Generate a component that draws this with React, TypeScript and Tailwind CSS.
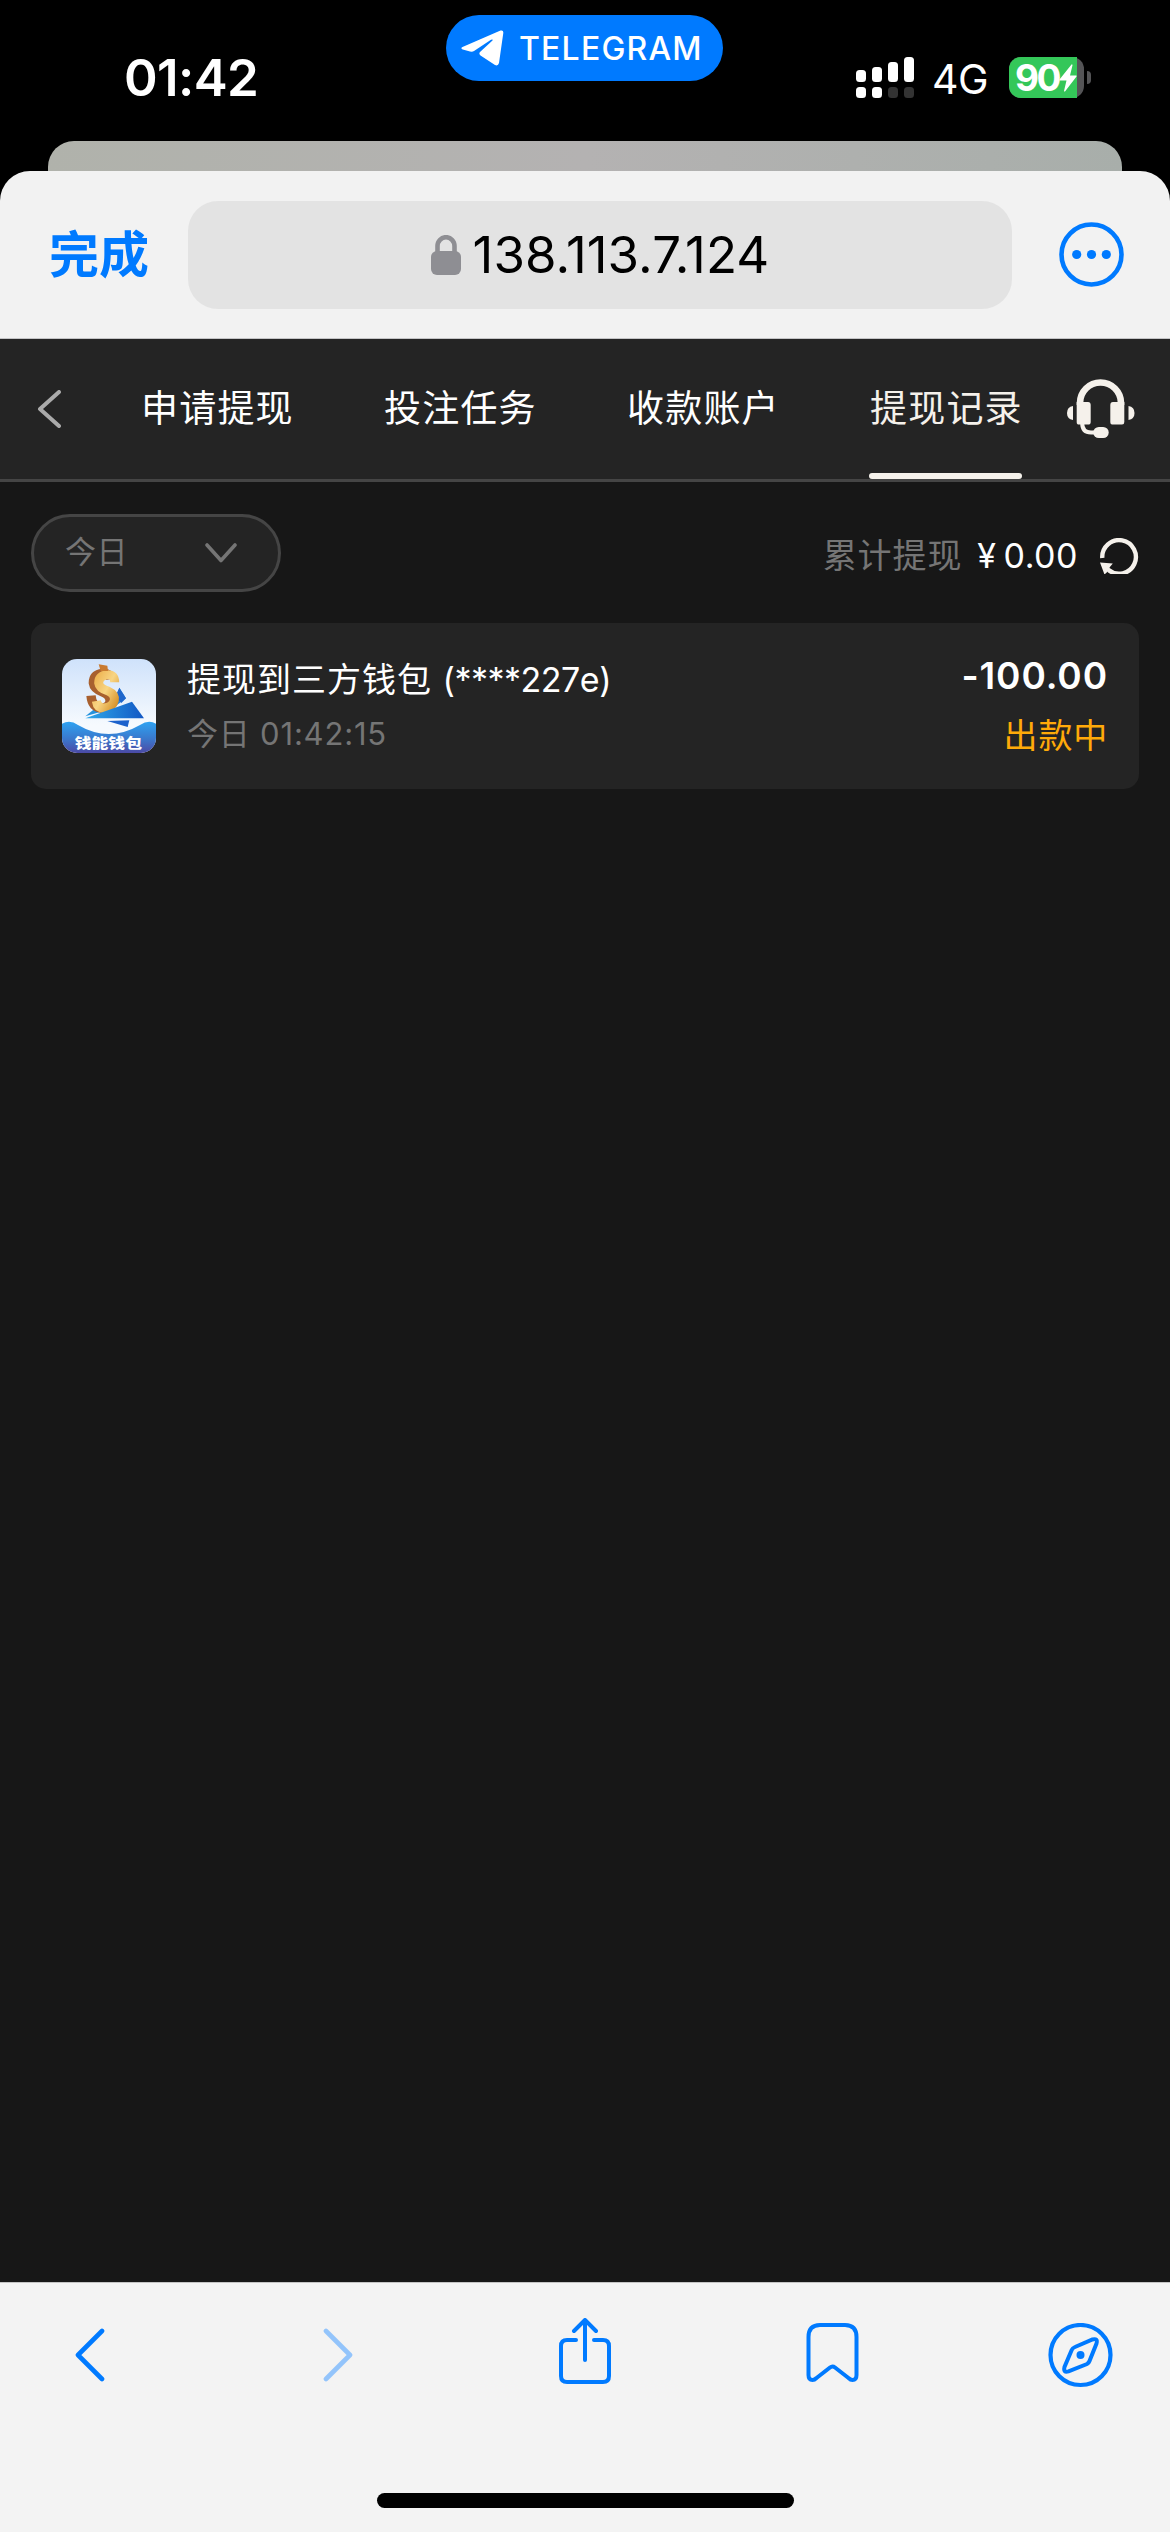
import type { ReactNode } from 'react';

const tabs = ['申请提现', '投注任务', '收款账户', '提现记录'];

const records = [
  { title: '提现到三方钱包', account: '(****227e)', time: '今日 01:42:15', amount: '-100.00', status: '出款中' },
];

function Icon({ w, h, className, children }: { w: number; h: number; className?: string; children: ReactNode }) {
  return (
    <svg width={w} height={h} viewBox={`0 0 ${w} ${h}`} fill="none" className={`block shrink-0 ${className ?? ''}`}>
      {children}
    </svg>
  );
}

function Signal() {
  return (
    <Icon w={58} h={41}>
      <rect x="0" y="13" width="10" height="12" rx="3.5" fill="#fff" />
      <rect x="16" y="10" width="10" height="15" rx="3.5" fill="#fff" />
      <rect x="32" y="5" width="10" height="20" rx="3.5" fill="#fff" />
      <rect x="48" y="0" width="10" height="25" rx="3.5" fill="#fff" />
      <rect x="0" y="30" width="10" height="11" rx="3.5" fill="#fff" />
      <rect x="16" y="30" width="10" height="11" rx="3.5" fill="#fff" />
      <rect x="32" y="30" width="10" height="11" rx="3.5" fill="#333" />
      <rect x="48" y="30" width="10" height="11" rx="3.5" fill="#333" />
    </Icon>
  );
}

function Battery() {
  return (
    <div className="flex items-center gap-[3px]">
      <div className="flex h-[41px] w-[75px] rounded-[12px] bg-[#545456]">
        <div className="flex w-[68px] shrink-0 items-center rounded-l-[12px] bg-[#34c759] pl-[6px]">
          <span className="w-[45px] text-[37px] leading-[43px] font-bold tracking-[-2.5px] text-white">90</span>
          <Icon w={18} h={28}>
            <path d="M12.5 0.5 L0.5 15.5 Q0 16.5 1 16.5 H7.5 L5 27 Q5.2 28 6.2 27.2 L17.5 12.5 Q18 11.5 17 11.5 H11 L13.5 1.2 Q13.4 0 12.5 0.5Z" fill="#fff" />
          </Icon>
        </div>
      </div>
      <div className="h-[13px] w-[4px] rounded-r-full bg-[#545456]" />
    </div>
  );
}

function StatusBar() {
  return (
    <div className="flex h-[141px] items-start">
      <div className="w-[446px] pt-[48px] pl-[124px] text-[51px] leading-[60px] font-semibold tracking-[-0.6px] text-white">01:42</div>
      <div className="mt-[15px] flex h-[66px] w-[277px] items-center rounded-full bg-[#007aff] pl-[15px]">
        <Icon w={43} h={36}>
          <path d="M1.5 17 L39.5 0.6 Q42.5 -0.3 42.3 3 L38 33 Q37 36.5 34 35 L19.5 25.5 Q17.5 24 19 22 L31.5 10.5 Q32.2 8.8 30 9.8 L13 21 Q11.5 22 9 21.5 L1.8 19.5 Q-0.8 18.3 1.5 17Z" fill="#fff" />
        </Icon>
        <span className="mt-[2px] ml-[15px] text-[32px] leading-[66px] font-medium tracking-[1.2px] text-white">TELEGRAM</span>
      </div>
      <div className="flex items-center pt-[57px] pl-[133px]">
        <Signal />
        <span className="ml-[18px] h-[41px] w-[77px] text-[41px] leading-[44px] tracking-[-0.5px] text-white">4G</span>
        <Battery />
      </div>
    </div>
  );
}

function AddressBar() {
  return (
    <div className="flex h-[168px] items-start rounded-t-[30px] border-b border-[#c4c4c6] bg-[#f2f2f2] pt-[30px]">
      <button className="w-[188px] pl-[49px] text-left text-[50px] leading-[108px] font-semibold text-[#007aff]">完成</button>
      <div className="flex h-[108px] w-[824px] items-center justify-center rounded-[30px] bg-[#e3e3e3]">
        <Icon w={30} h={40}>
          <rect x="0" y="16" width="30" height="24" rx="6" fill="#8e8e93" />
          <path d="M6.5 18 V11 A8.5 8.8 0 0 1 23.5 11 V18" stroke="#8e8e93" strokeWidth="4.6" />
        </Icon>
        <span className="ml-[12px] text-[51px] leading-[108px] tracking-[0.1px] text-black">138.113.7.124</span>
      </div>
      <Icon w={65} h={65} className="mt-[21px] ml-[47px]">
        <circle cx="32.5" cy="32.5" r="30" stroke="#007aff" strokeWidth="4.6" />
        <circle cx="17.7" cy="32.5" r="4.6" fill="#007aff" />
        <circle cx="32.5" cy="32.5" r="4.6" fill="#007aff" />
        <circle cx="47.3" cy="32.5" r="4.6" fill="#007aff" />
      </Icon>
    </div>
  );
}

function TabBar() {
  return (
    <div className="flex h-[143px] items-start border-b-[3px] border-[#454545] bg-[#242424]">
      <Icon w={24} h={38} className="mt-[51px] ml-[37px]">
        <path d="M22 2 L3 19 L22 36" stroke="#aaa" strokeWidth="4" strokeLinecap="round" strokeLinejoin="round" />
      </Icon>
      <div className="ml-[79px] flex gap-[90px]">
        {tabs.map((tab) => (
          <button
            key={tab}
            className={
              tab === '提现记录'
                ? 'flex h-[140px] w-[153px] flex-col justify-between text-left text-[#f5f1eb]'
                : 'flex h-[140px] w-[153px] flex-col justify-between text-left text-white'
            }
          >
            <span className="pt-[40px] pl-[1px] text-[37px] leading-[60px] tracking-[1.2px] whitespace-nowrap">{tab}</span>
            {tab === '提现记录' && <span className="h-[6px] w-full rounded-[3px] bg-[#f5f1eb]" />}
          </button>
        ))}
      </div>
      <Icon w={68} h={60} className="mt-[40px] ml-[45px]">
        <path d="M13 26 V24 A20.5 20.5 0 0 1 54 24 V26" stroke="#f5f1eb" strokeWidth="6.6" />
        <path d="M9.7 23 H21 Q23.7 23 23.7 26 V43 Q23.7 45.6 21 45.6 H12 Q9.7 45.6 9.7 43Z" fill="#f5f1eb" />
        <path d="M57.3 23 H46 Q43.3 23 43.3 26 V43 Q43.3 45.6 46 45.6 H55 Q57.3 45.6 57.3 43Z" fill="#f5f1eb" />
        <path d="M6 27 V41 Q0 40 0 34 Q0 28 6 27Z" fill="#f5f1eb" />
        <path d="M61.5 27 V41 Q67.5 40 67.5 34 Q67.5 28 61.5 27Z" fill="#f5f1eb" />
        <path d="M15.2 44 Q15.2 53.5 24 53.5 H30" stroke="#f5f1eb" strokeWidth="4" />
        <rect x="26.3" y="48" width="15.4" height="11" rx="5.5" fill="#f5f1eb" />
      </Icon>
    </div>
  );
}

function WalletLogo() {
  return (
    <svg width="94" height="94" viewBox="0 0 282 282" className="block shrink-0 rounded-[15px]">
      <defs>
        <linearGradient id="sky" x1="0" y1="0" x2="0" y2="1">
          <stop offset="0" stopColor="#cfe2fb" />
          <stop offset="0.7" stopColor="#f6fafe" />
        </linearGradient>
        <linearGradient id="wave" x1="0" y1="0" x2="0" y2="1">
          <stop offset="0" stopColor="#2ea3f2" />
          <stop offset="0.55" stopColor="#3a78cc" />
          <stop offset="1" stopColor="#4c4aa6" />
        </linearGradient>
        <linearGradient id="plane" x1="0" y1="0" x2="1" y2="0">
          <stop offset="0" stopColor="#2fa9ea" />
          <stop offset="1" stopColor="#1257c4" />
        </linearGradient>
        <linearGradient id="gold" x1="0" y1="0" x2="1" y2="1">
          <stop offset="0" stopColor="#eeb452" />
          <stop offset="0.5" stopColor="#f8d584" />
          <stop offset="1" stopColor="#d9952c" />
        </linearGradient>
      </defs>
      <rect width="282" height="282" fill="url(#sky)" />
      <path d="M172 86 L192 118 L152 148Z" fill="#2a86dc" />
      <path d="M172 86 L192 118 L178 132 L160 112Z" fill="#1f66cb" />
      <path d="M70 172 L100 148 L112 160Z" fill="#2492dd" />
      {/* bronze edge of the dollar sign */}
      <path d="M146 60 Q142 42 122 43 Q94 46 94 72 Q96 90 124 100 Q146 110 144 128 Q140 148 116 147 Q90 144 87 110" fill="none" stroke="#a8602f" strokeWidth="28" />
      <path d="M158 70 Q158 46 136 47 Q110 50 110 72 Q112 88 138 96 Q160 106 157 124 Q152 146 126 147 Q106 147 103 126" fill="none" stroke="url(#gold)" strokeWidth="27" />
      <path d="M110 16 L136 20 L138 36 L116 36Z" fill="#c97a30" />
      <path d="M70 178 L210 128 L246 178Z" fill="url(#plane)" />
      <path d="M136 186 L202 184 L197 204Z" fill="#1c62cc" />
      <path d="M0 194 Q24 180 48 198 Q140 252 234 198 Q260 180 282 194 V282 H0Z" fill="url(#wave)" />
      <text x="139" y="268" textAnchor="middle" fontSize="41" fontWeight="900" fill="#fff" textLength="202" lengthAdjust="spacingAndGlyphs">钱能钱包</text>
    </svg>
  );
}

function FilterRow() {
  return (
    <div className="flex items-start justify-between pt-[32px] pr-[31px] pl-[31px]">
      <button className="flex h-[78px] w-[250px] items-center justify-between rounded-full border-[3px] border-[#454545] bg-[#242424] pr-[41px] pl-[31px] text-[#757575]">
        <span className="-mt-[3px] text-[31px] leading-[60px] tracking-[0.6px]">今日</span>
        <Icon w={32} h={20}>
          <path d="M2 2 L16 17.5 L30 2" stroke="#757575" strokeWidth="3.6" strokeLinecap="round" strokeLinejoin="round" />
        </Icon>
      </button>
      <div className="flex h-[84px] items-center">
        <span className="text-[34px] leading-[60px] tracking-[0.9px] text-[#757575]">累计提现</span>
        <span className="ml-[15px] text-[34px] leading-[60px] tracking-[0.5px] [word-spacing:-3px] text-white">¥ 0.00</span>
        <Icon w={39} h={36} className="ml-[22px]">
          <path d="M2.3 20 A16.8 16.8 0 1 1 8.5 32" stroke="#f5f1eb" strokeWidth="4.4" />
          <path d="M0 24.6 L12.8 25.4 L9.5 29.5 L11 33 L8 33.2 L4.5 36.5Z" fill="#f5f1eb" />
        </Icon>
      </div>
    </div>
  );
}

function BottomBar() {
  return (
    <div className="flex h-[250px] flex-col border-t border-[#c4c4c4] bg-[#f3f3f3]">
      <div className="flex h-[210px] items-start pt-[33px] pl-[73px] text-[#007aff]">
        <Icon w={32} h={56} className="mt-[10px]">
          <path d="M29 5 L5 29 L29 53" stroke="currentColor" strokeWidth="4.6" strokeLinecap="round" strokeLinejoin="round" />
        </Icon>
        <Icon w={32} h={56} className="mt-[10px] ml-[218px]">
          <path d="M3 5 L27 29 L3 53" stroke="#93c4fb" strokeWidth="4.6" strokeLinecap="round" strokeLinejoin="round" />
        </Icon>
        <Icon w={52} h={68} className="mt-[2px] ml-[204px]">
          <g stroke="currentColor" strokeWidth="4" strokeLinecap="round" strokeLinejoin="round">
            <path d="M17 22 H8 Q2 22 2 28 V58 Q2 64 8 64 H44 Q50 64 50 58 V28 Q50 22 44 22 H35" />
            <path d="M26 42 V2 M15 13 L26 2 L37 13" />
          </g>
        </Icon>
        <Icon w={53} h={60} className="mt-[7px] ml-[195px]">
          <path d="M2.5 14 Q2.5 2 14 2 H39 Q50.5 2 50.5 14 V52 Q50.5 57 46.5 57 Q44.5 57 42.5 55 L29 44.5 Q26.5 42.5 24 44.5 L10.5 55 Q8.5 57 6.5 57 Q2.5 57 2.5 52Z" stroke="currentColor" strokeWidth="4" strokeLinejoin="round" />
        </Icon>
        <Icon w={65} h={65} className="mt-[7px] ml-[189px]">
          <circle cx="32.5" cy="32" r="30" stroke="currentColor" strokeWidth="4.2" />
          <path d="M27 24 L44.5 16.5 Q50 15 48.5 20.5 L41.5 38 Q40.8 40 39 41 L20.5 48.3 Q15 50 16.5 44 L23.7 27 Q24.5 25 27 24Z" stroke="currentColor" strokeWidth="4" />
          <circle cx="32.5" cy="32" r="4" fill="currentColor" />
        </Icon>
      </div>
      <div className="mx-auto h-[15px] w-[417px] rounded-full bg-black" />
    </div>
  );
}

export default function App() {
  return (
    <div className="flex h-[2532px] w-[1170px] flex-col overflow-hidden bg-black font-['Inter','Noto_Sans_CJK_SC',sans-serif]">
      <StatusBar />
      {/* Page behind the sheet */}
      <div className="mx-[48px] h-[30px] shrink-0 rounded-t-[26px] bg-linear-to-r from-[#b0b2ab] via-[#b4b2b2] to-[#a8aeaa]" />
      <AddressBar />
      <TabBar />

      {/* Withdrawal records */}
      <main className="flex flex-1 flex-col bg-[#171717]">
        <FilterRow />
        <div className="mt-[25px] px-[31px]">
          {records.map((r) => (
            <div key={r.time} className="flex h-[166px] items-center rounded-[15px] bg-[#242424] px-[31px]">
              <WalletLogo />
              <div className="ml-[31px] flex flex-1 flex-col">
                <span className="text-[34px] leading-[56px] tracking-[1px] text-white">
                  {r.title} <span className="tracking-[-0.5px]">{r.account}</span>
                </span>
                <span className="text-[31px] leading-[52px] tracking-[0.8px] text-[#757575]">{r.time}</span>
              </div>
              <div className="flex flex-col items-end pt-[4px]">
                <span className="text-[37px] leading-[56px] font-semibold tracking-[0.9px] text-white">{r.amount}</span>
                <span className="text-[34px] leading-[64px] tracking-[0.8px] text-[#ffaa09]">{r.status}</span>
              </div>
            </div>
          ))}
        </div>
      </main>

      <BottomBar />
    </div>
  );
}
